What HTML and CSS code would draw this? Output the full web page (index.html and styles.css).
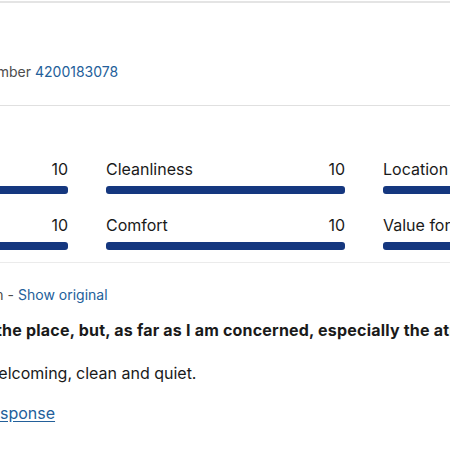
FILE: index.html
```html
<!DOCTYPE html>
<html>
<head>
<meta charset="utf-8">
<link rel="stylesheet" href="styles.css">
</head>
<body>
<div class="card">
  <section class="head">
    <div class="line small muted">
      <span class="pre pre-35"><span>Booking number</span></span><a class="link">4200183078</a>
    </div>
  </section>
  <section class="scores">
    <div class="score"><div class="top"><span>Staff</span><span>10</span></div><div class="bar"></div></div>
    <div class="score"><div class="top"><span>Cleanliness</span><span>10</span></div><div class="bar"></div></div>
    <div class="score"><div class="top"><span>Location</span><span>10</span></div><div class="bar"></div></div>
    <div class="score"><div class="top"><span>Facilities</span><span>10</span></div><div class="bar"></div></div>
    <div class="score"><div class="top"><span>Comfort</span><span>10</span></div><div class="bar"></div></div>
    <div class="score"><div class="top"><span>Value for money</span><span>10</span></div><div class="bar"></div></div>
  </section>
  <section class="review">
    <div class="line small muted trans">
      <span class="pre pre-18"><span>Translated from Italian -</span></span><a class="link">Show original</a>
    </div>
    <div class="line strong">
      <span class="pre pre-26"><span>Not only the</span></span><span>place, but, as far as I am concerned, especially the atmosphere</span>
    </div>
    <div class="line body-text">
      <span class="pre pre-76"><span>The apartment was welcoming,</span></span><span>clean and quiet.</span>
    </div>
    <div class="line resp">
      <a class="link under"><span class="pre pre-0"><span>Show re</span></span><span>sponse</span></a>
    </div>
  </section>
</div>
</body>
</html>
```
FILE: styles.css
```css
html, body {
  margin: 0;
  padding: 0;
  background: #fff;
}
body {
  width: 450px;
  height: 450px;
  overflow: hidden;
  font-family: Inter, "Noto Sans", sans-serif;
  color: #1a1a1a;
}
.card {
  margin-top: 1px;
  border-top: 2px solid #e4e4e4;
}
.head {
  padding: 59px 0 23px;
  border-bottom: 1px solid #e0e0e0;
}
.line {
  display: flex;
  white-space: nowrap;
}
.small {
  font-size: 14px;
  line-height: 20px;
}
.muted {
  color: #4d4d4d;
}
.link {
  color: #23609a;
  text-decoration: none;
}
.under {
  display: flex;
  text-decoration: underline;
  text-underline-offset: 2px;
}
.pre {
  display: flex;
  justify-content: flex-end;
  flex: none;
}
.pre > span {
  flex: none;
  margin-right: 4px;
}
.pre-35 { width: 35px; }
.pre-18 { width: 18px; }
.pre-26 { width: 26px; }
.pre-76 { width: 76px; }
.pre-0 { width: 0; }
.pre-0 > span { margin-right: 0; }

.scores {
  display: grid;
  grid-template-columns: repeat(3, 239px);
  column-gap: 38px;
  row-gap: 19px;
  margin-left: -171px;
  padding: 51px 0 12px;
  border-bottom: 1px solid #ebebeb;
}
.score .top {
  display: flex;
  justify-content: space-between;
  font-size: 16px;
  line-height: 24px;
  white-space: nowrap;
}
.bar {
  margin-top: 5px;
  height: 8px;
  border-radius: 3px;
  background: #15377f;
}
.review {
  padding-top: 22px;
}
.strong {
  margin-top: 13px;
  font-size: 16px;
  line-height: 24px;
  font-weight: 700;
  letter-spacing: 0.2px;
}
.body-text {
  margin-top: 19px;
  font-size: 16px;
  line-height: 24px;
}
.resp {
  margin-top: 16px;
  font-size: 16px;
  line-height: 24px;
}
```
